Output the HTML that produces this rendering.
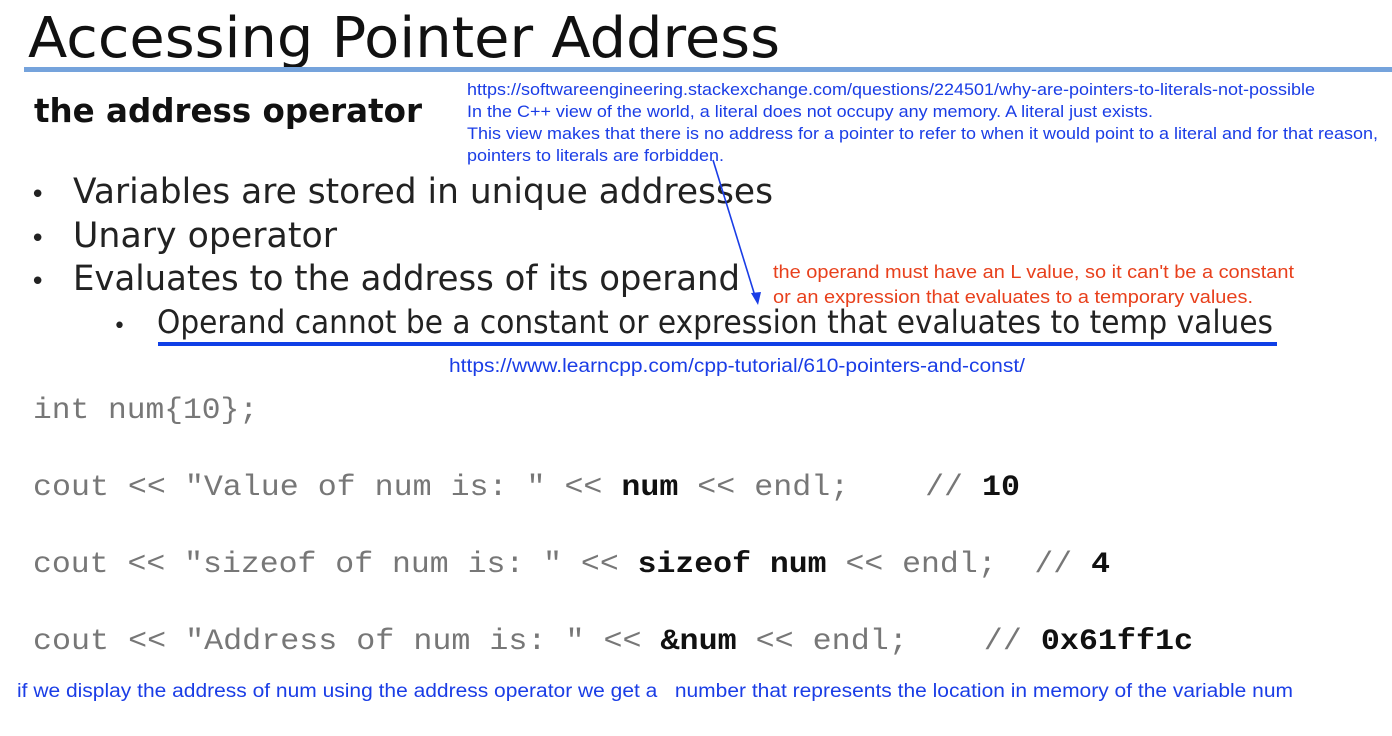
<!DOCTYPE html>
<html><head><meta charset="utf-8"><style>html,body{margin:0;padding:0;background:#fff;width:1392px;height:736px;overflow:hidden}text{white-space:pre}</style></head>
<body>
<svg width="1392" height="736" xmlns="http://www.w3.org/2000/svg">
<rect width="1392" height="736" fill="#fff"/>
<text x="28" y="57" font-family="DejaVu Sans, Liberation Sans, sans-serif" font-size="56" fill="#111" textLength="752" lengthAdjust="spacingAndGlyphs">Accessing Pointer Address</text>
<rect x="24" y="67" width="1368" height="5" fill="#75a3dc"/>
<text x="34" y="122" font-family="DejaVu Sans, Liberation Sans, sans-serif" font-weight="bold" font-size="33" fill="#111" textLength="388" lengthAdjust="spacingAndGlyphs">the address operator</text>
<g font-family="Liberation Sans, Arial, sans-serif" font-size="17" fill="#1a3de6">
<text x="467" y="95" textLength="848" lengthAdjust="spacingAndGlyphs">https://softwareengineering.stackexchange.com/questions/224501/why-are-pointers-to-literals-not-possible</text>
<text x="467" y="117" textLength="686" lengthAdjust="spacingAndGlyphs">In the C++ view of the world, a literal does not occupy any memory. A literal just exists.</text>
<text x="467" y="139" textLength="911" lengthAdjust="spacingAndGlyphs">This view makes that there is no address for a pointer to refer to when it would point to a literal and for that reason,</text>
<text x="467" y="161" textLength="257" lengthAdjust="spacingAndGlyphs">pointers to literals are forbidden.</text>
</g>
<g font-family="DejaVu Sans, Liberation Sans, sans-serif" font-size="35" fill="#222">
<text x="30" y="203" font-size="26">•</text>
<text x="73" y="203" textLength="700" lengthAdjust="spacingAndGlyphs">Variables are stored in unique addresses</text>
<text x="30" y="247" font-size="26">•</text>
<text x="73" y="247" textLength="264" lengthAdjust="spacingAndGlyphs">Unary operator</text>
<text x="30" y="290" font-size="26">•</text>
<text x="73" y="290" textLength="667" lengthAdjust="spacingAndGlyphs">Evaluates to the address of its operand</text>
<text x="113" y="333" font-size="22">•</text>
<text x="157" y="333" font-size="32" textLength="1116" lengthAdjust="spacingAndGlyphs">Operand cannot be a constant or expression that evaluates to temp values</text>
</g>
<rect x="158" y="342" width="1119" height="4" fill="#0f3fe6"/>
<line x1="713" y1="160" x2="755" y2="296" stroke="#1a3de6" stroke-width="1.6"/>
<polygon points="751,293 761,292 758,305" fill="#1a3de6"/>
<g font-family="Liberation Sans, Arial, sans-serif" font-size="18" fill="#e8401c">
<text x="773" y="278" textLength="521" lengthAdjust="spacingAndGlyphs">the operand must have an L value, so it can't be a constant</text>
<text x="773" y="303" textLength="480" lengthAdjust="spacingAndGlyphs">or an expression that evaluates to a temporary values.</text>
</g>
<text x="449" y="372" font-family="Liberation Sans, Arial, sans-serif" font-size="19" fill="#1a3de6" textLength="576" lengthAdjust="spacingAndGlyphs">https://www.learncpp.com/cpp-tutorial/610-pointers-and-const/</text>
<g font-family="Liberation Mono, Courier New, monospace" font-size="30" fill="#777">
<text x="33" y="418" textLength="225" lengthAdjust="spacingAndGlyphs">int num{10};</text>
<text x="33" y="495" textLength="987" lengthAdjust="spacingAndGlyphs">cout &lt;&lt; "Value of num is: " &lt;&lt; <tspan font-weight="bold" fill="#111">num</tspan> &lt;&lt; endl;    // <tspan font-weight="bold" fill="#111">10</tspan></text>
<text x="33" y="572" textLength="1077" lengthAdjust="spacingAndGlyphs">cout &lt;&lt; "sizeof of num is: " &lt;&lt; <tspan font-weight="bold" fill="#111">sizeof num</tspan> &lt;&lt; endl;  // <tspan font-weight="bold" fill="#111">4</tspan></text>
<text x="33" y="649" textLength="1160" lengthAdjust="spacingAndGlyphs">cout &lt;&lt; "Address of num is: " &lt;&lt; <tspan font-weight="bold" fill="#111">&amp;num</tspan> &lt;&lt; endl;    // <tspan font-weight="bold" fill="#111">0x61ff1c</tspan></text>
</g>
<text x="17" y="697" font-family="Liberation Sans, Arial, sans-serif" font-size="19" fill="#1a3de6" textLength="1276" lengthAdjust="spacingAndGlyphs">if we display the address of num using the address operator we get a   number that represents the location in memory of the variable num</text>
</svg>
</body></html>
